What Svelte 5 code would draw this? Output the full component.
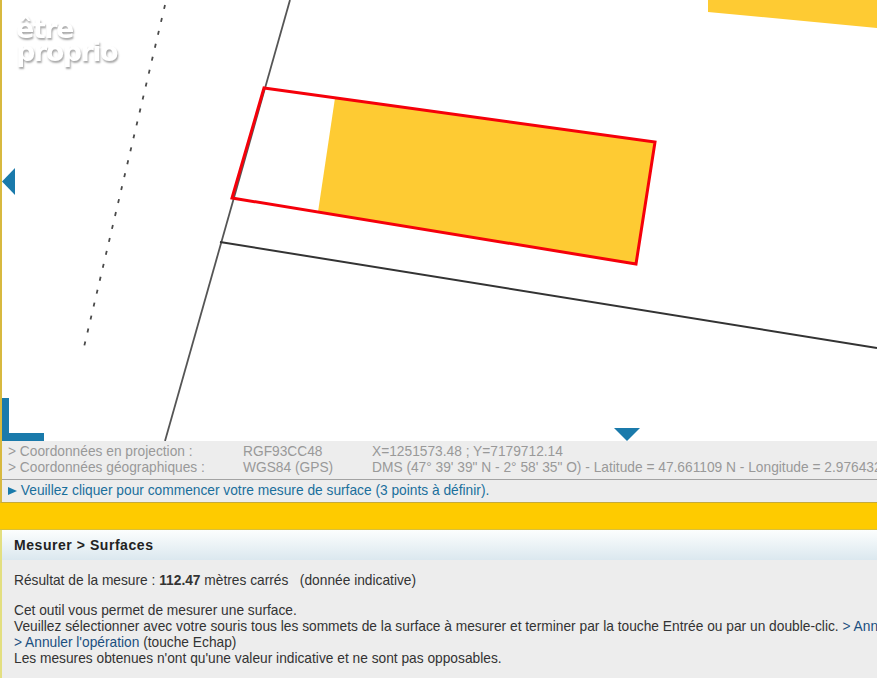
<script>
	const coords = [
		{ label: '> Coordonnées en projection :', system: 'RGF93CC48', value: 'X=1251573.48 ; Y=7179712.14' },
		{ label: '> Coordonnées géographiques :', system: 'WGS84 (GPS)', value: 'DMS (47° 39\' 39" N - 2° 58\' 35" O) - Latitude = 47.661109 N - Longitude = 2.976432 O' }
	];
</script>

<div class="page">
	<div class="map">
		<svg class="drawing" width="875" height="441" viewBox="2 0 875 441">
			<polygon points="708,0 877,0 877,28 708,12" fill="#fecb33" />
			<line x1="165" y1="5" x2="84" y2="347" stroke="#4a4a4a" stroke-width="1.800" stroke-dasharray="4 9.300" />
			<line x1="290" y1="0" x2="165" y2="441" stroke="#555" stroke-width="1.800" />
			<line x1="220" y1="242" x2="877" y2="348" stroke="#333" stroke-width="2" />
			<polygon points="335,98 655,142 636,264 318,212" fill="#fecb33" />
			<polygon points="264,88 655,142 636,264 232,198" fill="none" stroke="#f5000a" stroke-width="3" />
			<polygon points="15,168 15,195 2,181.500" fill="#1a7aab" />
			<polygon points="614,428 640,428 627,441" fill="#1a7aab" />
			<polygon points="2,398 9,398 9,433 44,433 44,441 2,441" fill="#1a7aab" />
		</svg>
		<div class="logo">être<br />proprio</div>
	</div>

	<div class="status">
		<div class="coords">
			{#each coords as row}
				<div class="coord-row">
					<span class="coord-label">{row.label}</span>
					<span class="coord-system">{row.system}</span>
					<span class="coord-value">{row.value}</span>
				</div>
			{/each}
		</div>
		<div class="hint">
			<svg class="arrow" width="9" height="10" viewBox="0 0 9 10"><polygon points="0,1 9,5 0,9" fill="#1a7aab" /></svg>
			Veuillez cliquer pour commencer votre mesure de surface (3 points à définir).
		</div>
	</div>

	<div class="band"></div>

	<div class="panel">
		<div class="panel-title">Mesurer &gt; Surfaces</div>
		<div class="panel-body">
			<p class="result">Résultat de la mesure : <b>112.47</b> mètres carrés &nbsp; (donnée indicative)</p>
			<p>Cet outil vous permet de mesurer une surface.</p>
			<p>Veuillez sélectionner avec votre souris tous les sommets de la surface à mesurer et terminer par la touche Entrée ou par un double-clic. <span class="link">&gt; Annuler la dernière saisie</span></p>
			<p><span class="link">&gt; Annuler l'opération</span> (touche Echap)</p>
			<p>Les mesures obtenues n'ont qu'une valeur indicative et ne sont pas opposables.</p>
		</div>
	</div>
</div>

<style>
	:global(body) {
		margin: 0;
		overflow: hidden;
	}

	.page {
		width: 877px;
		height: 678px;
		overflow: hidden;
		display: flex;
		flex-direction: column;
		font-family: 'Liberation Sans', Arial, sans-serif;
		font-size: 13.75px;
		background: #fff;
	}

	.map {
		position: relative;
		height: 441px;
		flex-shrink: 0;
		border-left: 2px solid #d8b93f;
		overflow: hidden;
		background: #fff;
	}

	.drawing {
		display: block;
	}

	.logo {
		position: absolute;
		left: 14px;
		top: 17px;
		font-family: 'DejaVu Sans', sans-serif;
		font-size: 27px;
		line-height: 23px;
		font-weight: bold;
		letter-spacing: -1.5px;
		color: #fff;
		text-shadow: 1px 2px 2px #a8a8a8;
		filter: blur(0.5px);
	}

	.status {
		height: 62px;
		flex-shrink: 0;
		background: #ededed;
		border-left: 2px solid #d8b93f;
		border-bottom: 1px solid #c5a93c;
		box-sizing: border-box;
		white-space: nowrap;
		overflow: hidden;
	}

	.coords {
		height: 39px;
		box-sizing: border-box;
		padding: 3px 0 0 6px;
		border-bottom: 1px solid #a3a3a3;
		color: #999;
	}

	.coord-row {
		display: flex;
		height: 16px;
		line-height: 16px;
	}

	.coord-label {
		width: 235px;
		flex-shrink: 0;
	}

	.coord-system {
		width: 129px;
		flex-shrink: 0;
	}

	.hint {
		padding-left: 6px;
		line-height: 22px;
		color: #1a6f9c;
	}

	.arrow {
		vertical-align: -1px;
	}

	.band {
		height: 26px;
		flex-shrink: 0;
		background: #fecb00;
		border-bottom: 1px solid #d9bf3a;
	}

	.panel {
		flex: 1;
		border-left: 2px solid #e3df80;
		background: #ededed;
		white-space: nowrap;
		overflow: hidden;
	}

	.panel-title {
		height: 30px;
		box-sizing: border-box;
		padding: 7px 0 0 12px;
		font-size: 14px;
		line-height: 16px;
		font-weight: bold;
		letter-spacing: 0.55px;
		color: #222;
		background: linear-gradient(to bottom, #fcfefe 0%, #dbe8ef 100%);
	}

	.panel-body {
		padding: 13px 0 0 12px;
		line-height: 16px;
		color: #333;
	}

	.panel-body p {
		margin: 0;
	}

	.result {
		padding-bottom: 14px;
	}

	.link {
		color: #1a4f80;
	}
</style>
